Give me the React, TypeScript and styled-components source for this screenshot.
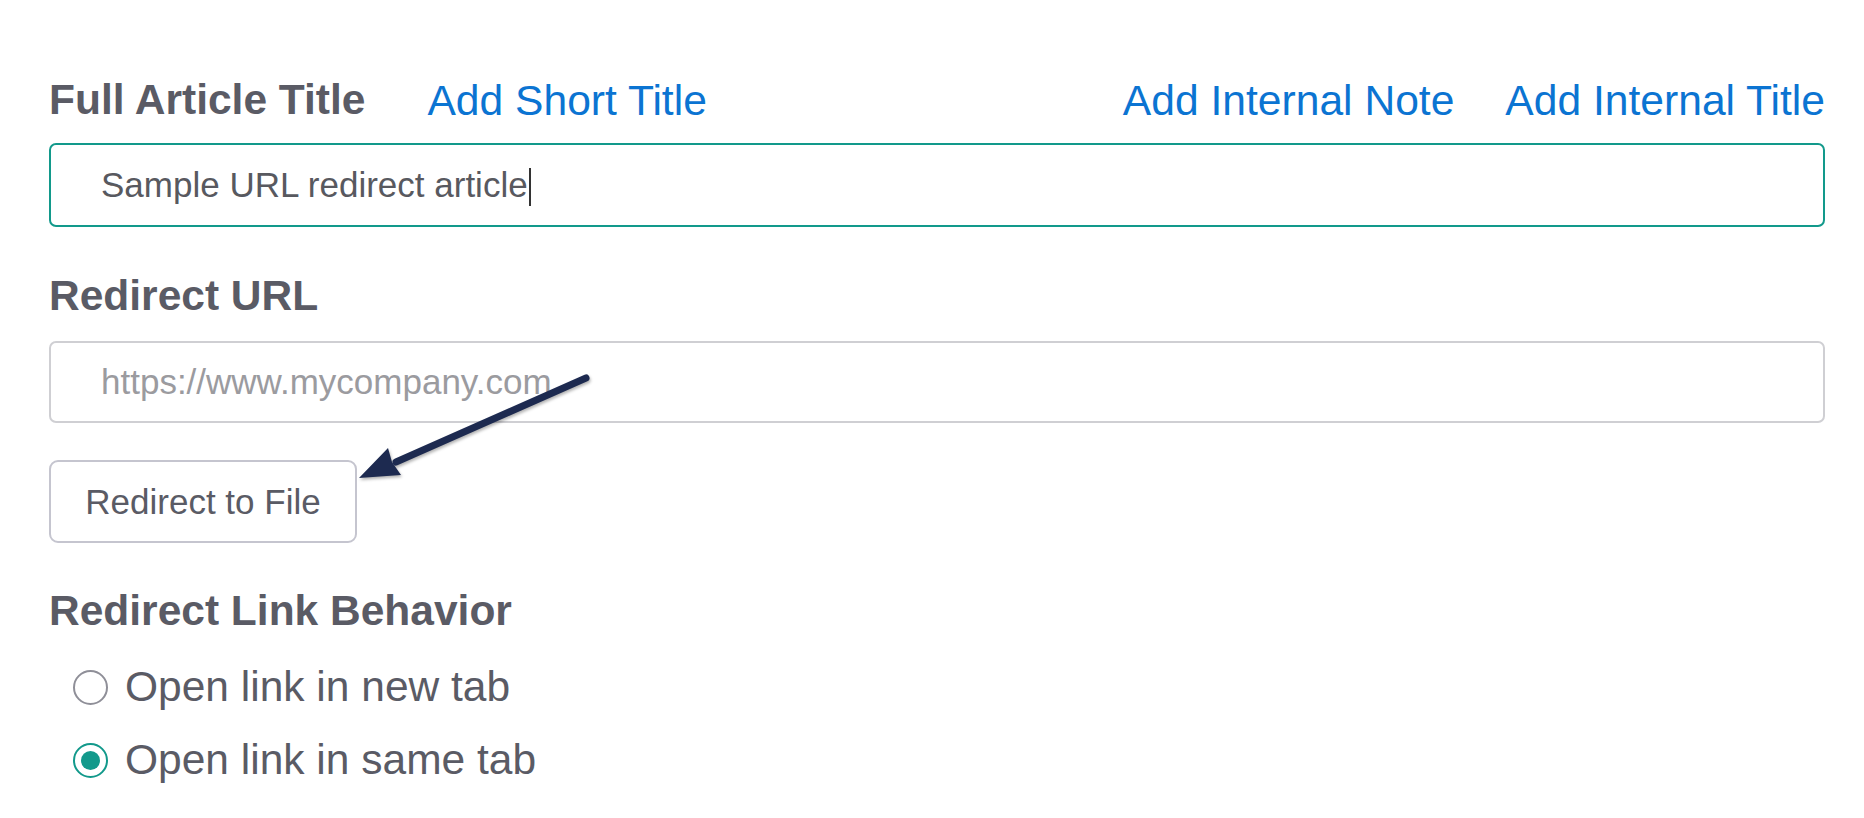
import React from "react";
import styled, { createGlobalStyle } from "styled-components";

const GlobalStyle = createGlobalStyle`
  html, body {
    margin: 0;
    padding: 0;
    background: #ffffff;
  }
  body {
    font-family: "Liberation Sans", Arial, sans-serif;
  }
`;

const Page = styled.div`
  position: relative;
  width: 1864px;
  height: 818px;
  box-sizing: border-box;
  padding: 75px 39px 0 49px;
  display: flex;
  flex-direction: column;
  overflow: hidden;
`;

const HeaderRow = styled.div`
  display: flex;
  justify-content: space-between;
  align-items: center;
  height: 50px;
`;

const LinkGroup = styled.div<{ $gap: number }>`
  display: flex;
  align-items: center;
  gap: ${(p) => p.$gap}px;
`;

const Label = styled.div<{ $top?: number }>`
  font-size: 42.5px;
  line-height: 50px;
  font-weight: 700;
  color: #5a5b65;
  margin-top: ${(p) => p.$top ?? 0}px;
`;

const TextLink = styled.a`
  font-size: 42.6px;
  line-height: 50px;
  color: #0b74d2;
  text-decoration: none;
  cursor: pointer;
`;

const Field = styled.div<{ $top: number }>`
  box-sizing: border-box;
  height: 84px;
  margin-top: ${(p) => p.$top}px;
  border: 2px solid #12998b;
  border-radius: 7px;
  padding-left: 50px;
  display: flex;
  align-items: center;
  font-size: 35px;
  color: #58595f;
`;

const Caret = styled.span`
  display: inline-block;
  width: 2px;
  height: 38px;
  margin-left: 1px;
  background: #333;
  transform: translateY(2px);
`;

const UrlInput = styled.input<{ $top: number }>`
  box-sizing: border-box;
  display: block;
  width: 100%;
  height: 82px;
  margin: ${(p) => p.$top}px 0 0 0;
  border: 2px solid #cfcfd3;
  border-radius: 7px;
  padding: 0 0 0 50px;
  font-family: "Liberation Sans", Arial, sans-serif;
  font-size: 35px;
  color: #58595f;
  outline: none;
  background: #fff;

  &::placeholder {
    color: #9b9b9f;
  }
`;

const FileButton = styled.button`
  box-sizing: border-box;
  align-self: flex-start;
  width: 308px;
  height: 83px;
  margin-top: 37px;
  border: 2px solid #c5c5cf;
  border-radius: 9px;
  background: #fff;
  font-family: "Liberation Sans", Arial, sans-serif;
  font-size: 35px;
  color: #5a5b65;
  padding: 0;
  cursor: pointer;
`;

const RadioList = styled.div`
  display: flex;
  flex-direction: column;
  gap: 23px;
  margin-top: 26px;
  padding-left: 24px;
`;

const RadioRow = styled.label`
  display: flex;
  align-items: center;
  gap: 17px;
  height: 50px;
  font-size: 42.5px;
  color: #5a5b65;
  cursor: pointer;
`;

const RadioDot = styled.span<{ $checked: boolean }>`
  box-sizing: border-box;
  width: 35px;
  height: 35px;
  border-radius: 50%;
  border: 2px solid ${(p) => (p.$checked ? "#12998b" : "#8f8f98")};
  display: flex;
  align-items: center;
  justify-content: center;
  flex-shrink: 0;

  &::after {
    content: "";
    width: 19px;
    height: 19px;
    border-radius: 50%;
    background: ${(p) => (p.$checked ? "#12998b" : "transparent")};
  }
`;

const ArrowOverlay = styled.svg`
  position: absolute;
  left: 340px;
  top: 360px;
  width: 260px;
  height: 130px;
  pointer-events: none;
  filter: drop-shadow(1px 2px 1.5px rgba(0, 0, 0, 0.3));
`;

function Arrow() {
  return (
    <ArrowOverlay viewBox="340 360 260 130">
      <line
        x1={586}
        y1={378}
        x2={396}
        y2={462}
        stroke="#1d2a50"
        strokeWidth={7}
        strokeLinecap="round"
      />
      <polygon points="359,478 388,448 392,462 401,475" fill="#1d2a50" />
    </ArrowOverlay>
  );
}

const options = [
  { label: "Open link in new tab", checked: false },
  { label: "Open link in same tab", checked: true },
];

export default function App() {
  return (
    <>
      <GlobalStyle />
      <Page>
        <HeaderRow>
          <LinkGroup $gap={62}>
            <Label>Full Article Title</Label>
            <TextLink>Add Short Title</TextLink>
          </LinkGroup>
          <LinkGroup $gap={51}>
            <TextLink>Add Internal Note</TextLink>
            <TextLink>Add Internal Title</TextLink>
          </LinkGroup>
        </HeaderRow>
        <Field $top={18}>
          Sample URL redirect article
          <Caret />
        </Field>

        <Label $top={44}>Redirect URL</Label>
        <UrlInput $top={20} placeholder="https://www.mycompany.com" />
        <FileButton type="button">Redirect to File</FileButton>

        <Label $top={43}>Redirect Link Behavior</Label>
        <RadioList>
          {options.map((o) => (
            <RadioRow key={o.label}>
              <RadioDot $checked={o.checked} />
              {o.label}
            </RadioRow>
          ))}
        </RadioList>
        <Arrow />
      </Page>
    </>
  );
}
